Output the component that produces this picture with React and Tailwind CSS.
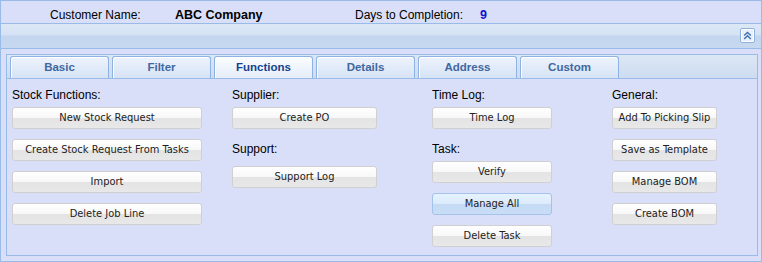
import React from "react";

const TABS = ["Basic", "Filter", "Functions", "Details", "Address", "Custom"];

function Btn({ label, w, over }) {
  return (
    <div
      className={`h-[22px] flex items-center justify-center rounded-[3px] border text-[11px] text-[#222] ${
        over
          ? "border-[#a4c3eb] bg-[linear-gradient(#e6f2fe,#dcebfc_48%,#c5daf4_52%,#c9ddf6)]"
          : "border-[#d0d0d0] bg-[linear-gradient(#ffffff,#f8f8f8_48%,#e4e4e4_52%,#e8e8e8)]"
      }`}
      style={{ width: w, fontFamily: "'DejaVu Sans Condensed', 'Liberation Sans', sans-serif" }}
    >
      {label}
    </div>
  );
}

function Label({ children, className = "" }) {
  return <div className={`h-[16px] leading-[16px] text-[12px] text-black ${className}`}>{children}</div>;
}

export default function App() {
  return (
    <div
      className="w-[762px] h-[262px] border border-[#99bbe8] bg-[#d9dff8] flex flex-col"
      style={{ fontFamily: "'Liberation Sans', Arial, sans-serif" }}
    >
      {/* header info */}
      <div className="h-[23px] border-b border-[#99bbe8] flex pt-[7px] pl-[49px] text-[12px] leading-[14px] text-black">
        <span className="w-[125px]">Customer Name:</span>
        <span className="w-[180px] font-bold text-[12.5px]">ABC Company</span>
        <span className="w-[125px]">Days to Completion:</span>
        <span className="font-bold text-[12.5px] text-[#1010d0]">9</span>
      </div>

      {/* collapse bar */}
      <div className="h-[25px] border-b border-[#99bbe8] bg-[linear-gradient(#dde8f6,#d4e2f4_45%,#c4d6ef_50%,#c7d9f0)] flex justify-end pt-[4px] pr-[6px]">
        <div className="w-[15px] h-[15px] rounded-[2px] border border-[#8fb1dd] bg-[#e8f0fb] shadow-[inset_0_0_0_1px_#ffffff] flex items-center justify-center">
          <svg width="9" height="9" viewBox="0 0 9 9" fill="none" stroke="#3f6fae" strokeWidth="1.4">
            <path d="M1.2 4.6 L4.5 1.4 L7.8 4.6" />
            <path d="M1.2 8 L4.5 4.8 L7.8 8" />
          </svg>
        </div>
      </div>

      {/* tab panel */}
      <div className="flex-1 pt-[5px] pl-[5px] pr-[3px] pb-[5px]">
        <div className="h-[202px] border border-[#99bbe8] flex flex-col">
          <div className="h-[24px] border-b border-[#99bbe8] bg-[linear-gradient(#dce7f5,#cddcf1)] flex items-end gap-[3px] pl-[3px]">
            {TABS.map((t) => {
              const active = t === "Functions";
              return (
                <div
                  key={t}
                  className={`w-[99px] h-[22px] rounded-t-[3px] border border-b-0 border-[#8db2e3] flex items-center justify-center text-[11.5px] font-bold shadow-[inset_1px_1px_0_#ffffff] ${
                    active
                      ? "bg-[linear-gradient(#fbfdff,#e4edf9)] text-[#15428b]"
                      : "bg-[linear-gradient(#edf3fc,#d6e3f5)] text-[#41679f]"
                  }`}
                >
                  {t}
                </div>
              );
            })}
          </div>

          <div className="flex-1 flex pt-[8px] pl-[5px]">
            <div className="w-[220px] flex flex-col">
              <Label className="mb-[4px]">Stock Functions:</Label>
              <div className="flex flex-col gap-[10px]">
                <Btn label="New Stock Request" w={190} />
                <Btn label="Create Stock Request From Tasks" w={190} />
                <Btn label="Import" w={190} />
                <Btn label="Delete Job Line" w={190} />
              </div>
            </div>

            <div className="w-[200px] flex flex-col">
              <Label className="mb-[4px]">Supplier:</Label>
              <Btn label="Create PO" w={145} />
              <Label className="mt-[12px] mb-[9px]">Support:</Label>
              <Btn label="Support Log" w={145} />
            </div>

            <div className="w-[180px] flex flex-col">
              <Label className="mb-[4px]">Time Log:</Label>
              <Btn label="Time Log" w={120} />
              <Label className="mt-[12px] mb-[4px]">Task:</Label>
              <div className="flex flex-col gap-[10px]">
                <Btn label="Verify" w={120} />
                <Btn label="Manage All" w={120} over />
                <Btn label="Delete Task" w={120} />
              </div>
            </div>

            <div className="flex flex-col">
              <Label className="mb-[4px]">General:</Label>
              <div className="flex flex-col gap-[10px]">
                <Btn label="Add To Picking Slip" w={105} />
                <Btn label="Save as Template" w={105} />
                <Btn label="Manage BOM" w={105} />
                <Btn label="Create BOM" w={105} />
              </div>
            </div>
          </div>
        </div>
      </div>
    </div>
  );
}
